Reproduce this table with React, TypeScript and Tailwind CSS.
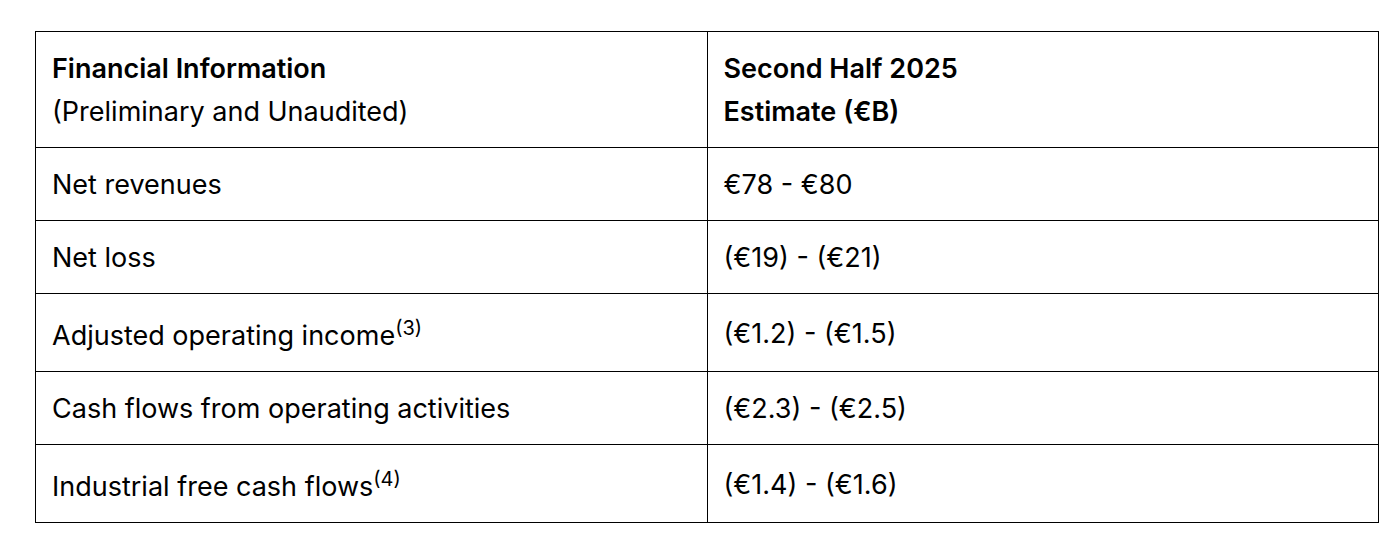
const rows = [
  { label: "Net revenues", value: "€78 - €80" },
  { label: "Net loss", value: "(€19) - (€21)" },
  { label: "Adjusted operating income", note: "(3)", value: "(€1.2) - (€1.5)" },
  { label: "Cash flows from operating activities", value: "(€2.3) - (€2.5)" },
  { label: "Industrial free cash flows", note: "(4)", value: "(€1.4) - (€1.6)" },
];

export default function App() {
  return (
    <div className="min-h-screen bg-white pl-[35px] pt-[31px] font-['Inter',sans-serif] text-[27px] text-black">
      <table className="w-[1344px] table-fixed border-collapse">
        <thead>
          <tr>
            <th className="w-1/2 border border-black px-4 pt-[15px] pb-[14px] text-left align-top leading-[43px] font-normal">
              <div className="font-semibold">Financial Information</div>
              <div>(Preliminary and Unaudited)</div>
            </th>
            <th className="w-1/2 border border-black px-4 pt-[15px] pb-[14px] text-left align-top leading-[43px] font-semibold">
              <div>Second Half 2025</div>
              <div>Estimate (€B)</div>
            </th>
          </tr>
        </thead>
        <tbody>
          {rows.map((r) => (
            <tr key={r.label}>
              <td className="border border-black px-4 pt-[15px] pb-[14px] leading-[43px]">
                {r.label}
                {r.note && <span className="align-super text-[20px] leading-[39px]">{r.note}</span>}
              </td>
              <td className="border border-black px-4 pt-[15px] pb-[14px] leading-[43px]">{r.value}</td>
            </tr>
          ))}
        </tbody>
      </table>
    </div>
  );
}
